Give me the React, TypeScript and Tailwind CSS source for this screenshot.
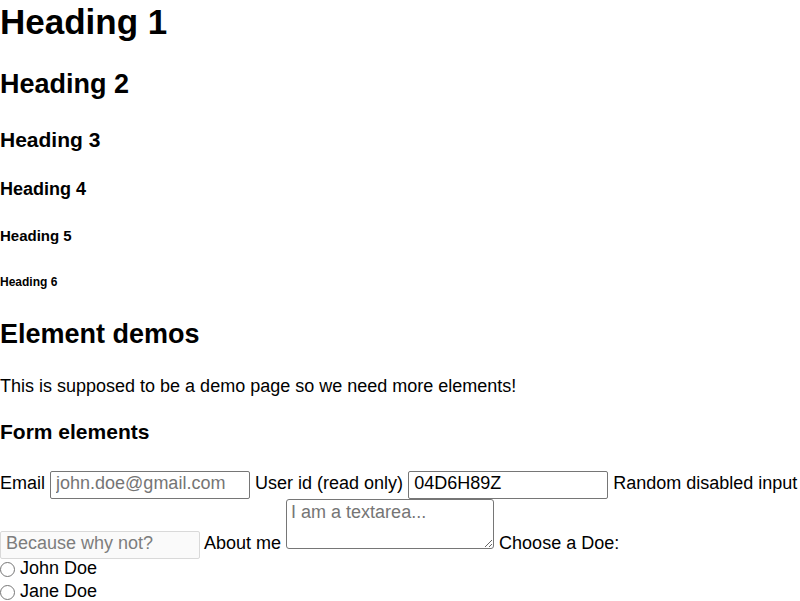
export default function App() {
  return (
    <div className="font-['Liberation_Sans',Arial,sans-serif] text-[18px] leading-[23px] text-black bg-white min-h-screen">
      {/* Headings */}
      <h1 className="mt-[2px] text-[35px] leading-[40px] font-bold">Heading 1</h1>
      <h2 className="mt-[27px] text-[27px] leading-[31px] font-bold">Heading 2</h2>
      <h3 className="mt-[28px] text-[21px] leading-[24px] font-bold">Heading 3</h3>
      <h4 className="mt-[27px] text-[18px] leading-[21px] font-bold">Heading 4</h4>
      <h5 className="mt-[27px] text-[15px] leading-[17px] font-bold">Heading 5</h5>
      <h6 className="mt-[31px] text-[12px] leading-[14px] font-bold">Heading 6</h6>

      {/* Element demos */}
      <h2 className="mt-[30px] text-[27px] leading-[31px] font-bold">Element demos</h2>
      <p className="mt-[26px] leading-[21px]">This is supposed to be a demo page so we need more elements!</p>
      <h3 className="mt-[23px] text-[21px] leading-[24px] font-bold">Form elements</h3>

      {/* Form */}
      <form className="mt-[27px]">
        <div className="h-[86px]">
          Email{' '}
          <input
            type="email"
            placeholder="john.doe@gmail.com"
            className="inline-block align-baseline w-[200px] h-[28px] border border-[#767676] rounded-[2px] pl-[5px] pb-[3px] leading-[21px] placeholder:text-[#757575]"
          />{' '}
          User id (read only){' '}
          <input
            type="text"
            readOnly
            defaultValue="04D6H89Z"
            className="inline-block align-baseline w-[200px] h-[28px] border border-[#767676] rounded-[2px] pl-[5px] pb-[3px] leading-[21px] outline-none"
          />{' '}
          Random disabled input{' '}
          <input
            type="text"
            disabled
            placeholder="Because why not?"
            className="inline-block align-baseline w-[200px] h-[28px] border border-[#d9d9d9] bg-[#fafafa] rounded-[2px] pl-[5px] pb-[3px] leading-[21px] placeholder:text-[#7d7d7d]"
          />{' '}
          About me{' '}
          <textarea
            placeholder="I am a textarea..."
            className="inline-block align-baseline w-[208px] h-[50px] border border-[#767676] rounded-[3px] px-[4px] pt-[2px] leading-[21px] placeholder:text-[#757575]"
          />{' '}
          Choose a Doe:
        </div>

        <div>
          <input
            type="radio"
            name="doe"
            className="appearance-none inline-block align-[-3px] w-[15px] h-[15px] rounded-full border border-[#767676] bg-white"
          />{' '}
          John Doe
        </div>
        <div>
          <input
            type="radio"
            name="doe"
            className="appearance-none inline-block align-[-3px] w-[15px] h-[15px] rounded-full border border-[#767676] bg-white"
          />{' '}
          Jane Doe
        </div>
      </form>
    </div>
  );
}
